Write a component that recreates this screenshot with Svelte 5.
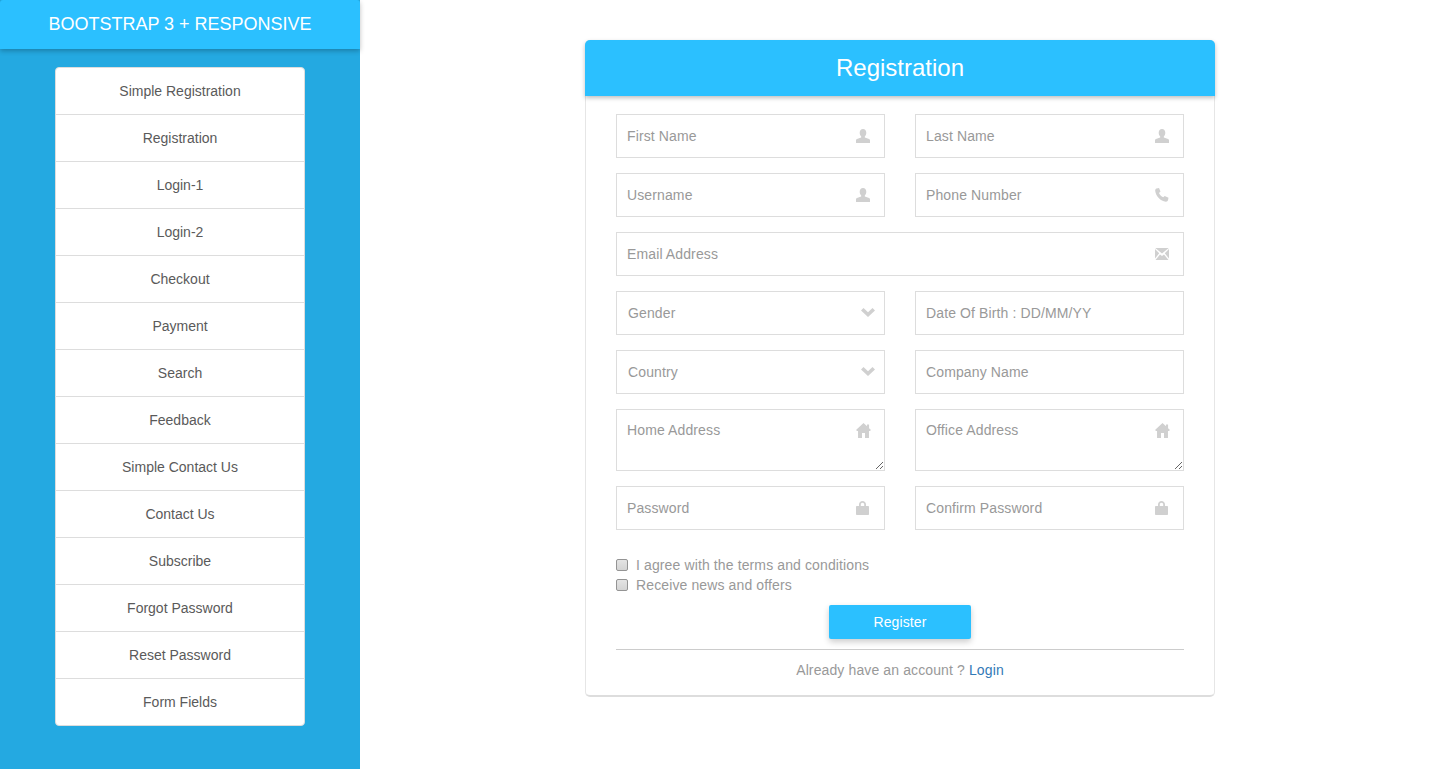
<script lang="ts">
  const links = [
    'Simple Registration', 'Registration', 'Login-1', 'Login-2', 'Checkout', 'Payment', 'Search',
    'Feedback', 'Simple Contact Us', 'Contact Us', 'Subscribe', 'Forgot Password', 'Reset Password', 'Form Fields'
  ];

  const icons: Record<string, string> = {
    user: 'M7 0c2 0 3.300 1.500 3.300 3.700 0 1.600-.7 3-1.500 3.700v1.200c1.800.6 4.200 1.200 5.200 2.200V14H0v-3.200c1-1 3.400-1.600 5.200-2.200V7.400C4.400 6.700 3.700 5.300 3.700 3.700 3.700 1.500 5 0 7 0z',
    phone: 'M1.500.5 4 0l1.500 3.500L4 5c.7 1.800 2.300 3.300 4.200 4.200L9.700 8l3.800 1.800-.5 2.500c-.3 1-1.200 1.500-2.200 1.400C5.500 13.200.8 8 .2 3 .1 1.800.5.8 1.500.5z',
    mail: 'M.3 0h13.400L7 5.400zM0 1l4.200 4.300L0 10.500zM14 1v9.500L9.800 5.300zM.5 12 5 6.500 7 8l2-1.500 4.500 5.500z',
    chevron: 'M0 2.500 2.500 0 7 4.200 11.500 0 14 2.500 7 9z',
    home: 'M7 0 10.300 3V1.500h1.900v3.300L14 6.500 13 7.500h-.9V14H8.400V9.300H5.600V14H1.900V7.500H1L0 6.500z',
    lock: 'M3 5V3.500C3 1.300 4.700 0 6.500 0S10 1.300 10 3.500V5h2.200c.5 0 .8.3.8.8v7.400c0 .5-.3.8-.8.8H.8c-.5 0-.8-.3-.8-.8V5.800C0 5.300.3 5 .8 5zM4.800 5h3.400V3.500c0-1-.7-1.700-1.700-1.700s-1.700.7-1.700 1.700z'
  };
</script>

{#snippet icon(name: string)}
  <svg class="icon {name}" viewBox="0 0 14 14" aria-hidden="true"><path fill-rule="evenodd" d={icons[name]} /></svg>
{/snippet}

{#snippet field(placeholder: string, name?: string)}
  <div class="field">
    <input type="text" {placeholder} />
    {#if name}{@render icon(name)}{/if}
  </div>
{/snippet}

{#snippet picker(label: string)}
  <div class="field">
    <select>
      <option>{label}</option>
    </select>
    {@render icon('chevron')}
  </div>
{/snippet}

{#snippet area(placeholder: string)}
  <div class="field">
    <textarea {placeholder}></textarea>
    {@render icon('home')}
  </div>
{/snippet}

<div class="page">
  <aside class="sidebar">
    <header class="brand">BOOTSTRAP 3 + RESPONSIVE</header>
    <ul class="menu">
      {#each links as link}
        <li><a href="#top">{link}</a></li>
      {/each}
    </ul>
  </aside>

  <main class="content">
    <section class="card">
      <h1>Registration</h1>
      <form>
        <div class="row">
          {@render field('First Name', 'user')}
          {@render field('Last Name', 'user')}
        </div>
        <div class="row">
          {@render field('Username', 'user')}
          {@render field('Phone Number', 'phone')}
        </div>
        {@render field('Email Address', 'mail')}
        <div class="row">
          {@render picker('Gender')}
          {@render field('Date Of Birth : DD/MM/YY')}
        </div>
        <div class="row">
          {@render picker('Country')}
          {@render field('Company Name')}
        </div>
        <div class="row">
          {@render area('Home Address')}
          {@render area('Office Address')}
        </div>
        <div class="row">
          {@render field('Password', 'lock')}
          {@render field('Confirm Password', 'lock')}
        </div>

        <div class="checks">
          <label><input type="checkbox" /> I agree with the terms and conditions</label>
          <label><input type="checkbox" /> Receive news and offers</label>
        </div>
        <button type="button">Register</button>
        <hr />
        <p class="foot">Already have an account ? <a href="#top">Login</a></p>
      </form>
    </section>
  </main>
</div>

<style>
  :global(body) {
    margin: 0;
    background: #fff;
    font-family: "Liberation Sans", Arial, sans-serif;
    font-size: 14px;
    color: #999;
  }

  .page {
    display: flex;
    min-height: 769px;
  }

  /* left column */
  .sidebar {
    flex: 0 0 360px;
    background: #24a9e1;
  }
  .brand {
    height: 49px;
    line-height: 48px;
    background: #2bc0ff;
    color: #fff;
    font-size: 18px;
    text-align: center;
    border-radius: 3px 3px 0 0;
    box-shadow: 0 2px 5px rgba(0, 0, 0, 0.25);
  }
  .menu {
    list-style: none;
    width: 250px;
    margin: 18px auto 0;
    padding: 0;
    box-sizing: border-box;
    background: #fff;
    border: 1px solid #ddd;
    border-radius: 4px;
  }
  .menu li + li {
    border-top: 1px solid #ddd;
  }
  .menu a {
    display: block;
    height: 46px;
    line-height: 46px;
    text-align: center;
    color: #5a5a5a;
    text-decoration: none;
  }

  /* registration card */
  .content {
    flex: 1;
    display: flex;
    justify-content: center;
    align-items: flex-start;
    padding-top: 40px;
  }
  .card {
    width: 630px;
    box-sizing: border-box;
    background: #fff;
    border: 1px solid #e6e6e6;
    border-top: 0;
    border-bottom: 2px solid #ddd;
    border-radius: 5px;
  }
  h1 {
    margin: 0 -1px;
    height: 56px;
    line-height: 56px;
    background: #2bc0ff;
    color: #fff;
    font-size: 24px;
    font-weight: 400;
    text-align: center;
    border-radius: 5px 5px 0 0;
    box-shadow: 0 2px 4px rgba(0, 0, 0, 0.25);
  }
  form {
    display: flex;
    flex-direction: column;
    gap: 15px;
    padding: 18px 30px 15px;
    letter-spacing: 0.12px;
  }
  .row {
    display: grid;
    grid-template-columns: 269px 269px;
    gap: 30px;
  }
  .field {
    position: relative;
    display: flex;
  }
  input[type='text'],
  select,
  textarea {
    width: 100%;
    box-sizing: border-box;
    height: 44px;
    margin: 0;
    padding: 0 40px 0 10px;
    border: 1px solid #ddd;
    border-radius: 0;
    background: #fff;
    color: #999;
    font: inherit;
    letter-spacing: inherit;
    outline: 0;
  }
  select {
    appearance: none;
    padding-left: 11px;
  }
  textarea {
    display: block;
    height: 62px;
    padding-top: 11px;
    padding-bottom: 0;
    line-height: 18px;
    resize: both;
  }
  input::placeholder,
  textarea::placeholder {
    color: #999;
    opacity: 1;
  }
  .icon {
    position: absolute;
    top: 15px;
    right: 15px;
    width: 14px;
    height: 14px;
    fill: #d0d0d0;
    pointer-events: none;
  }
  .icon.chevron {
    top: 17px;
    right: 10px;
  }
  .icon.home {
    top: 14px;
    right: 14px;
    width: 15px;
    height: 15px;
  }
  .icon.mail {
    top: 16px;
  }

  .checks {
    display: flex;
    flex-direction: column;
    gap: 2px;
    margin-top: 11px;
  }
  .checks label {
    display: flex;
    align-items: center;
    height: 18px;
    line-height: 18px;
    white-space: pre;
  }
  .checks input {
    appearance: none;
    box-sizing: border-box;
    width: 12px;
    height: 12px;
    margin: 0 4px 0 0;
    border: 1px solid #949494;
    border-radius: 2px;
    background: linear-gradient(#e4e4e4, #d4d4d4);
  }
  button {
    align-self: center;
    width: 142px;
    height: 34px;
    margin-top: -4px;
    border: 0;
    border-radius: 2px;
    background: #2bc0ff;
    color: #fff;
    font: inherit;
    letter-spacing: inherit;
    box-shadow: 0 3px 6px rgba(0, 0, 0, 0.2);
  }
  hr {
    width: 100%;
    margin: -5px 0 0;
    border: 0;
    border-top: 1px solid #ccc;
  }
  .foot {
    margin: -5px 0 0;
    line-height: 20px;
    text-align: center;
  }
  .foot a {
    color: #337ab7;
    text-decoration: none;
  }
</style>
